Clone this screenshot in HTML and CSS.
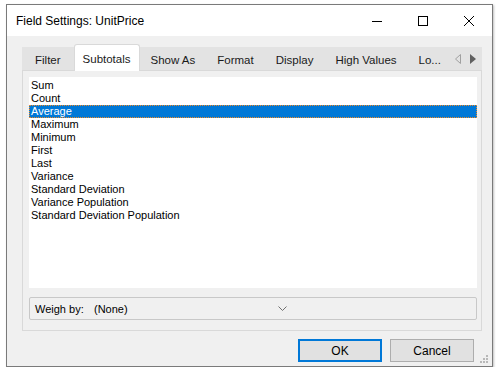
FILE: index.html
```html
<!DOCTYPE html>
<html lang="en">
<head>
    <meta charset="UTF-8">
    <meta name="viewport" content="width=device-width, initial-scale=1.0">
    <title>Field Settings: UnitPrice</title>
    <link rel="stylesheet" href="styles.css">
</head>
<body>
    <div class="window">
        <div class="titlebar">
            <div class="title">Field Settings: UnitPrice</div>
            <div class="caption-buttons">
                <div class="caption-btn">
                    <svg width="10" height="10" viewBox="0 0 10 10"><path d="M0 5.5h10" stroke="#000" stroke-width="1"/></svg>
                </div>
                <div class="caption-btn">
                    <svg width="10" height="10" viewBox="0 0 10 10"><rect x="0.5" y="0.5" width="9" height="9" fill="none" stroke="#000" stroke-width="1"/></svg>
                </div>
                <div class="caption-btn">
                    <svg width="10" height="10" viewBox="0 0 10 10"><path d="M0 0L10 10M10 0L0 10" stroke="#000" stroke-width="1"/></svg>
                </div>
            </div>
        </div>

        <div class="client">
            <div class="tabs">
                <div class="tab-row">
                    <div class="tab first">Filter</div>
                    <div class="tab active">Subtotals</div>
                    <div class="tab">Show As</div>
                    <div class="tab">Format</div>
                    <div class="tab">Display</div>
                    <div class="tab">High Values</div>
                    <div class="tab">Lo...</div>
                    <div class="tab-scroll">
                        <svg width="6" height="10" viewBox="0 0 6 10"><path d="M5.5 0.5L0.5 5L5.5 9.5Z" fill="none" stroke="#a0a0a0" stroke-width="1"/></svg>
                        <svg width="6" height="10" viewBox="0 0 6 10"><path d="M0 0L6 5L0 10Z" fill="#606060"/></svg>
                    </div>
                </div>
                <div class="tab-page">
                    <div class="listbox">
                        <div class="item">Sum</div>
                        <div class="item">Count</div>
                        <div class="item selected">Average</div>
                        <div class="item">Maximum</div>
                        <div class="item">Minimum</div>
                        <div class="item">First</div>
                        <div class="item">Last</div>
                        <div class="item">Variance</div>
                        <div class="item">Standard Deviation</div>
                        <div class="item">Variance Population</div>
                        <div class="item">Standard Deviation Population</div>
                    </div>
                    <div class="combo">
                        <span class="combo-label">Weigh by:</span>
                        <span class="combo-value">(None)</span>
                        <svg class="combo-arrow" width="9" height="5" viewBox="0 0 9 5"><path d="M0.5 0.5L4.5 4.5L8.5 0.5" fill="none" stroke="#707070" stroke-width="1"/></svg>
                    </div>
                </div>
            </div>

            <div class="buttons">
                <div class="button default">OK</div>
                <div class="button">Cancel</div>
            </div>
        </div>
        <div class="grip">
            <svg width="8" height="8" viewBox="0 0 8 8" fill="#b8b8b8">
                <rect x="6" y="0" width="2" height="2"/>
                <rect x="3" y="3" width="2" height="2"/><rect x="6" y="3" width="2" height="2"/>
                <rect x="0" y="6" width="2" height="2"/><rect x="3" y="6" width="2" height="2"/><rect x="6" y="6" width="2" height="2"/>
            </svg>
        </div>
    </div>
</body>
</html>
```

FILE: styles.css
```css
body {
    margin: 0;
    background-color: #ffffff;
    font-family: "Liberation Sans", Arial, sans-serif;
    color: #000;
}

.window {
    position: relative;
    margin: 4px 0 0 6px;
    width: 485px;
    height: 361px;
    border: 1px solid #7a7a7a;
    background-color: #f0f0f0;
    box-shadow: 1px 1px 2px rgba(0, 0, 0, 0.25);
    display: flex;
    flex-direction: column;
}

/* Title bar */
.titlebar {
    height: 31px;
    background-color: #ffffff;
    display: flex;
    align-items: center;
    justify-content: space-between;
}
.title {
    padding-left: 9px;
    font-size: 12px;
}
.caption-buttons {
    display: flex;
    height: 100%;
}
.caption-btn {
    width: 46px;
    display: flex;
    align-items: center;
    justify-content: center;
}

/* Client area */
.client {
    padding: 11px 10px 0 15px;
    display: flex;
    flex-direction: column;
}
.tabs {
    display: flex;
    flex-direction: column;
}
.tab-row {
    height: 23px;
    background-color: #e3e3e3;
    display: flex;
    align-items: stretch;
    font-size: 11.5px;
    white-space: nowrap;
}
.tab {
    padding: 3px 11px 0 11px;
    display: flex;
    align-items: center;
    color: #1a1a1a;
}
.tab.first {
    padding: 3px 13px 0 13px;
}
.tab.active {
    position: relative;
    margin-top: -3px;
    margin-bottom: -1px;
    background-color: #ffffff;
    border: 1px solid #d9d9d9;
    border-bottom: none;
    border-radius: 3px 3px 0 0;
    padding: 1px 8px 0 8px;
    z-index: 1;
}
.tab-scroll {
    margin-left: auto;
    padding: 0 6px 0 0;
    display: flex;
    align-items: center;
    gap: 9px;
}
.tab-page {
    height: 250px;
    border: 1px solid #d9d9d9;
    background-color: #f0f0f0;
    padding: 6px 4px 3px 6px;
    display: flex;
    flex-direction: column;
}

/* List */
.listbox {
    height: 209px;
    background-color: #ffffff;
    font-size: 11px;
    padding-top: 2px;
}
.item {
    height: 13px;
    line-height: 13px;
    padding-left: 2px;
}
.item.selected {
    background-color: #0078d7;
    color: #ffffff;
    outline: 1px dotted #f08a24;
    outline-offset: -1px;
}

/* Combo */
.combo {
    margin-top: 9px;
    height: 21px;
    border: 1px solid #c8c8c8;
    border-radius: 2px;
    display: flex;
    align-items: center;
    font-size: 11px;
    padding-left: 5px;
}
.combo-label {
    width: 59px;
}
.combo-arrow {
    margin-left: 150px;
}

/* Buttons */
.buttons {
    margin-top: 8px;
    display: flex;
    justify-content: flex-end;
    gap: 8px;
    padding-right: 8px;
}
.button {
    width: 82px;
    height: 21px;
    border: 1px solid #adadad;
    background-color: #e1e1e1;
    display: flex;
    align-items: center;
    justify-content: center;
    font-size: 12px;
}
.button.default {
    width: 80px;
    height: 19px;
    border: 2px solid #0078d7;
}

.grip {
    position: absolute;
    right: 4px;
    bottom: 3px;
    line-height: 0;
}
```
